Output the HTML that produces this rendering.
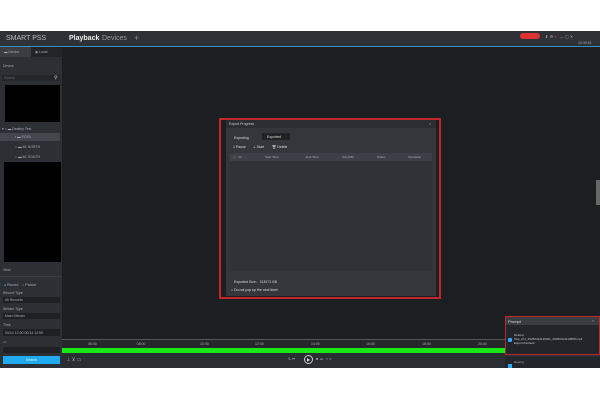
<!DOCTYPE html>
<html><head><meta charset="utf-8"><style>
*{margin:0;padding:0;box-sizing:border-box}
body{width:600px;height:400px;background:#fff;position:relative;overflow:hidden;font-family:"Liberation Sans",sans-serif;color:#ccc}
.a{position:absolute}
.t{font-size:3.5px;color:#aab}
</style></head><body>
<div class="a" style="left:0;top:31px;width:600px;height:337px;background:#1c1e22"></div>
<!-- top bar -->
<div class="a" style="left:0;top:31px;width:600px;height:15px;background:#2e3136"></div>
<div class="a" style="left:0;top:46px;width:600px;height:1px;background:#3a8fc0"></div>
<div class="a" style="left:6px;top:35px;font-size:7px;color:#bbb">SMART PSS</div>
<div class="a" style="left:69px;top:35px;font-size:7px;color:#eee;font-weight:bold">Playback</div>
<div class="a" style="left:102px;top:35px;font-size:7px;color:#999">Devices</div>
<div class="a" style="left:134px;top:33px;font-size:9px;color:#888">+</div>
<div class="a" style="left:520px;top:33px;width:20px;height:6px;background:#d33;border-radius:3px"></div>
<div class="a" style="left:545px;top:34px;font-size:4px;color:#aaa">⬇ ⚙ <span style="color:#c33">●</span> &nbsp;&nbsp;— ▢ ✕</div>
<div class="a t" style="left:578px;top:41px">10:30:51</div>
<!-- left panel -->
<div class="a" style="left:0;top:47px;width:62px;height:321px;background:#2c2f34"></div>
<div class="a" style="left:0;top:47px;width:31px;height:10px;background:#3a3d42"></div>
<div class="a t" style="left:4px;top:50px">▬ Device</div>
<div class="a" style="left:31px;top:47px;width:31px;height:10px;background:#222428"></div>
<div class="a t" style="left:35px;top:50px">◉ Local</div>
<div class="a t" style="left:3px;top:64px">Device</div>
<div class="a" style="left:2px;top:75px;width:58px;height:6px;background:#24262a"></div>
<div class="a t" style="left:4px;top:76px;color:#667">Search</div>
<div class="a" style="left:54px;top:75px;font-size:5px;color:#ccc">⚲</div>
<div class="a" style="left:5px;top:85px;width:55px;height:37px;background:#000"></div>
<div class="a t" style="left:2px;top:127px">▾ ○ ▬ Destiny Test</div>
<div class="a" style="left:0;top:133px;width:60px;height:8px;background:#43474d"></div>
<div class="a t" style="left:15px;top:135px">▪ ▬ POOL</div>
<div class="a t" style="left:15px;top:145px">○ ▬ B1 NORTH</div>
<div class="a t" style="left:15px;top:155px">○ ▬ B1 SOUTH</div>
<div class="a" style="left:4px;top:162px;width:57px;height:100px;background:#000"></div>
<div class="a t" style="left:3px;top:268px">View</div>
<div class="a" style="left:0;top:276px;width:62px;height:1px;background:#3b3e43"></div>
<div class="a t" style="left:4px;top:283px"><span style="color:#3af">●</span> Record &nbsp;&nbsp; ○ Picture</div>
<div class="a t" style="left:3px;top:291px">Record Type</div>
<div class="a" style="left:3px;top:297px;width:57px;height:6px;background:#1e2024"></div>
<div class="a t" style="left:5px;top:298px">All Records</div>
<div class="a t" style="left:3px;top:307px">Stream Type</div>
<div class="a" style="left:3px;top:313px;width:57px;height:6px;background:#1e2024"></div>
<div class="a t" style="left:5px;top:314px">Main Stream</div>
<div class="a t" style="left:3px;top:323px">Time</div>
<div class="a" style="left:3px;top:329px;width:57px;height:7px;background:#1e2024"></div>
<div class="a t" style="left:5px;top:331px">00/14 12:00 00/14 12:59</div>
<div class="a t" style="left:3px;top:340px">▭</div>
<div class="a" style="left:3px;top:347px;width:57px;height:6px;background:#1e2024"></div>
<div class="a" style="left:3px;top:356px;width:57px;height:8px;background:#20aaf0"></div>
<div class="a t" style="left:26px;top:358px;color:#dff">Search</div>
<!-- timeline -->
<div class="a" style="left:62px;top:339px;width:538px;height:1px;background:#555"></div>
<div class="a" style="left:62px;top:340px;width:538px;height:8px;background:#25272b"></div>
<div class="a t" style="left:88px;top:342px">06:00 &nbsp;&nbsp;&nbsp;&nbsp;&nbsp;&nbsp;&nbsp;&nbsp;&nbsp;&nbsp;&nbsp;&nbsp;&nbsp;&nbsp;&nbsp;&nbsp;&nbsp;&nbsp;&nbsp;&nbsp;&nbsp;&nbsp;&nbsp;&nbsp;&nbsp;&nbsp;&nbsp;&nbsp;&nbsp;&nbsp;&nbsp;&nbsp;&nbsp;&nbsp;&nbsp;&nbsp;&nbsp;&nbsp;&nbsp;&nbsp;08:00</div>
<div class="a t" style="left:200px;top:342px">10:00</div><div class="a t" style="left:255px;top:342px">12:00</div>
<div class="a t" style="left:311px;top:342px">14:00</div><div class="a t" style="left:366px;top:342px">16:00</div>
<div class="a t" style="left:422px;top:342px">18:00</div><div class="a t" style="left:478px;top:342px">20:00</div>
<div class="a" style="left:62px;top:348px;width:443px;height:5px;background:#18e818"></div>
<div class="a" style="left:62px;top:353px;width:538px;height:15px;background:#2a2d31"></div>
<div class="a t" style="left:66px;top:357px;font-size:5px">⊥ ⊻ ▭</div>
<div class="a t" style="left:288px;top:357px">⇅ ⏮</div>
<div class="a" style="left:304px;top:355px;width:9px;height:9px;border:1px solid #ccc;border-radius:50%;font-size:4px;text-align:center;line-height:7px;color:#eee">▶</div>
<div class="a t" style="left:316px;top:357px">■ &nbsp;⏭ &nbsp;&nbsp;» ▭</div>
<div class="a" style="left:596px;top:180px;width:4px;height:25px;background:#666"></div>
<!-- dialog -->
<div class="a" style="left:219px;top:118px;width:222px;height:181px;border:2px solid #c0272d;background:#1c1e22"></div>
<div class="a" style="left:226px;top:120px;width:210px;height:176px;background:#33363b"></div>
<div class="a" style="left:226px;top:120px;width:210px;height:8px;background:#2a2d31"></div>
<div class="a t" style="left:229px;top:122px;color:#ccc">Export Progress</div>
<div class="a t" style="left:429px;top:122px">×</div>
<div class="a t" style="left:234px;top:136px;color:#ddd">Exporting</div>
<div class="a" style="left:262px;top:133px;width:28px;height:7px;background:#202226"></div>
<div class="a t" style="left:267px;top:135px;color:#ddd">Exported</div>
<div class="a t" style="left:233px;top:145px;color:#ddd">⁞⁞ Pause &nbsp;&nbsp;&nbsp;&nbsp;&nbsp; ⊥ Start &nbsp;&nbsp;&nbsp;&nbsp;&nbsp;&nbsp; 🗑 Delete</div>
<div class="a" style="left:230px;top:153px;width:202px;height:8px;background:#3d4046"></div>
<div class="a t" style="left:233px;top:155px;font-size:3px">▢ &nbsp;&nbsp;All</div>
<div class="a t" style="left:265px;top:155px;font-size:3px">Start Time</div>
<div class="a t" style="left:306px;top:155px;font-size:3px">End Time</div>
<div class="a t" style="left:342px;top:155px;font-size:3px">Size(KB)</div>
<div class="a t" style="left:377px;top:155px;font-size:3px">Status</div>
<div class="a t" style="left:408px;top:155px;font-size:3px">Operation</div>
<div class="a" style="left:230px;top:161px;width:202px;height:110px;background:#2f3237"></div>
<div class="a t" style="left:234px;top:280px;color:#ddd">Exported Size: &nbsp;&nbsp;218171 KB</div>
<div class="a t" style="left:231px;top:288px;color:#ddd">○ Do not pop up the next time!</div>
<!-- prompt -->
<div class="a" style="left:505px;top:316px;width:95px;height:39px;border:1.5px solid #c0272d;background:#22252a"></div>
<div class="a" style="left:506px;top:317px;width:93px;height:8px;background:#393c41"></div>
<div class="a t" style="left:508px;top:319px;color:#ddd;font-size:4px">Prompt</div>
<div class="a t" style="left:592px;top:319px">×</div>
<div class="a" style="left:508px;top:338px;width:4px;height:4px;background:#3af;border-radius:1px"></div>
<div class="a t" style="left:514px;top:333px;font-size:3px;line-height:4px;color:#ccc">Destiny<br>Test_ch1_20250414110001_20250414110858.mp4<br>Export finished!</div>
<div class="a" style="left:505px;top:357px;width:95px;height:11px;background:#22252a"></div>
<div class="a t" style="left:514px;top:360px;font-size:3px">Destiny</div>
<div class="a" style="left:508px;top:364px;width:4px;height:4px;background:#3af"></div>
</body></html>
